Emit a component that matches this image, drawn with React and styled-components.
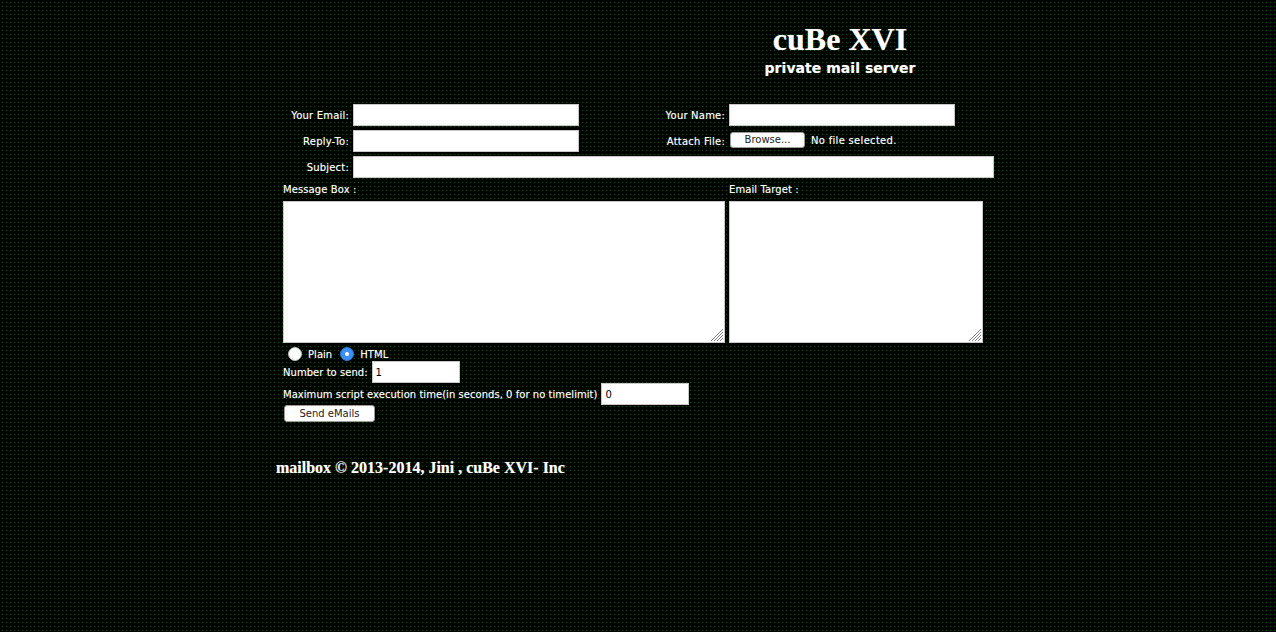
import React from 'react';
import styled, { createGlobalStyle } from 'styled-components';

const GlobalStyle = createGlobalStyle`
  html, body {
    margin: 0;
    padding: 0;
    background-color: #000;
    background-image: conic-gradient(from 270deg at 1px 1px, #075607 90deg, transparent 0);
    background-size: 4px 4px;
    background-position: 2px 2px;
    min-height: 100%;
  }
  body {
    min-height: 632px;
    color: #fff;
    font-family: 'DejaVu Sans', Verdana, sans-serif;
    font-size: 10px;
    letter-spacing: 0.04px;
    text-shadow: 0 0 1px rgba(255, 255, 255, 0.45);
  }
`;

const Page = styled.div`
  display: flex;
  flex-direction: column;
  padding: 21px 0 0 276px;
`;

const Header = styled.header`
  width: 280px;
  margin-left: 424px;
  display: flex;
  flex-direction: column;
  align-items: center;
  height: 83px;
`;

const Title = styled.h1`
  margin: 0;
  font-family: 'Liberation Serif', 'Times New Roman', serif;
  font-weight: bold;
  font-size: 32px;
  line-height: 37px;
`;

const Subtitle = styled.h2`
  margin: 0;
  font-family: 'DejaVu Sans', Verdana, sans-serif;
  font-weight: bold;
  font-size: 14px;
  line-height: 20px;
`;

const Form = styled.form`
  display: flex;
  flex-direction: column;
  padding-left: 7px;
  margin: 0;
`;

const FieldGrid = styled.div`
  display: grid;
  grid-template-columns: 66px 226px 72px 66px 1fr;
  column-gap: 4px;
  row-gap: 4px;
  width: 711px;
  align-items: center;
`;

const Label = styled.label`
  text-align: right;
  white-space: nowrap;
  letter-spacing: 0.2px;
  grid-column: ${p => p.$col || 'auto'};
  justify-self: end;
`;

const TextInput = styled.input`
  box-sizing: border-box;
  height: 22px;
  width: ${p => p.$width || 226}px;
  padding: 1px 3px;
  margin: 0;
  border: 1px solid #c8c8c8;
  border-radius: 0;
  background: #fff;
  color: #000;
  font-family: 'DejaVu Sans', Verdana, sans-serif;
  font-size: 10px;
  outline: none;
  grid-column: ${p => p.$col || 'auto'};
`;

const FilePicker = styled.div`
  display: flex;
  align-items: center;
  gap: 6px;
  padding-left: 1px;
  margin-top: -2px;
  grid-column: 5;
`;

const FileName = styled.span`
  letter-spacing: 0.3px;
`;

const PushButton = styled.button`
  box-sizing: border-box;
  width: ${p => p.$width}px;
  height: ${p => p.$height}px;
  margin: 0;
  padding: 0;
  background: #fff;
  color: #222;
  border: 1px solid #9a9a9a;
  border-radius: 3px;
  font-family: 'DejaVu Sans', Verdana, sans-serif;
  font-size: 10px;
  line-height: 1;
`;

const TextAreaRow = styled.div`
  display: grid;
  grid-template-columns: 442px 254px;
  column-gap: 4px;
  margin-top: 4px;
`;

const Column = styled.div`
  display: flex;
  flex-direction: column;
`;

const BoxCaption = styled.div`
  height: 19px;
  line-height: 16px;
  letter-spacing: 0.1px;
  white-space: nowrap;
`;

const AreaWrap = styled.div`
  position: relative;
  height: 142px;
`;

const Area = styled.textarea`
  box-sizing: border-box;
  display: block;
  width: 100%;
  height: 100%;
  margin: 0;
  border: 1px solid #c8c8c8;
  border-radius: 0;
  background: #fff;
  outline: none;
  resize: none;
`;

const GripIcon = styled.svg`
  position: absolute;
  right: 1px;
  bottom: 1px;
  width: 14px;
  height: 14px;
  pointer-events: none;
`;

const RadioRow = styled.div`
  box-sizing: border-box;
  display: flex;
  align-items: center;
  height: 18px;
  padding: 4px 0 0 5px;
`;

const RadioDot = styled.span`
  box-sizing: border-box;
  width: 14px;
  height: 14px;
  border-radius: 50%;
  display: flex;
  align-items: center;
  justify-content: center;
  background: ${p => (p.$on ? '#3b8ff5' : '#fff')};
  border: 1px solid ${p => (p.$on ? '#2a78dc' : '#bbb')};
  margin-right: 6px;
  &::after {
    content: '';
    width: 4px;
    height: 4px;
    border-radius: 50%;
    background: ${p => (p.$on ? '#fff' : 'transparent')};
  }
`;

const RadioText = styled.span`
  margin-right: 8px;
`;

const OptionRow = styled.div`
  display: flex;
  align-items: center;
  gap: 4px;
  height: 22px;
  white-space: nowrap;
`;

const SubmitRow = styled.div`
  padding-left: 1px;
  display: flex;
`;

const Footer = styled.footer`
  margin-top: 36px;
  font-family: 'Liberation Serif', 'Times New Roman', serif;
  font-weight: bold;
  font-size: 16px;
  line-height: 20px;
  letter-spacing: 0;
`;

const Grip = () => (
  <GripIcon viewBox="0 0 14 14">
    <path d="M1 13 13 1M4 13l9-9M7 13l6-6M10 13l3-3" stroke="#808080" strokeWidth="1" fill="none" />
  </GripIcon>
);

export default function App() {
  return (
    <Page>
      <GlobalStyle />
      <Header>
        <Title>cuBe XVI</Title>
        <Subtitle>private mail server</Subtitle>
      </Header>
      <Form onSubmit={e => e.preventDefault()}>
        <FieldGrid>
          <Label>Your Email:</Label>
          <TextInput />
          <Label $col="4">Your Name:</Label>
          <TextInput $col="5" />

          <Label>Reply-To:</Label>
          <TextInput />
          <Label $col="4">Attach File:</Label>
          <FilePicker>
            <PushButton type="button" $width={75} $height={16}>Browse...</PushButton>
            <FileName>No file selected.</FileName>
          </FilePicker>

          <Label>Subject:</Label>
          <TextInput $col="2 / 6" $width={641} />
        </FieldGrid>

        <TextAreaRow>
          <Column>
            <BoxCaption>Message Box :</BoxCaption>
            <AreaWrap>
              <Area />
              <Grip />
            </AreaWrap>
          </Column>
          <Column>
            <BoxCaption>Email Target :</BoxCaption>
            <AreaWrap>
              <Area />
              <Grip />
            </AreaWrap>
          </Column>
        </TextAreaRow>

        <RadioRow>
          <RadioDot />
          <RadioText>Plain</RadioText>
          <RadioDot $on />
          <RadioText>HTML</RadioText>
        </RadioRow>

        <OptionRow>
          <span>Number to send:</span>
          <TextInput $width={88} defaultValue="1" />
        </OptionRow>
        <OptionRow>
          <span>Maximum script execution time(in seconds, 0 for no timelimit)</span>
          <TextInput $width={88} defaultValue="0" />
        </OptionRow>
        <SubmitRow>
          <PushButton type="submit" $width={91} $height={17}>Send eMails</PushButton>
        </SubmitRow>
      </Form>
      <Footer>mailbox © 2013-2014, Jini , cuBe XVI- Inc</Footer>
    </Page>
  );
}
